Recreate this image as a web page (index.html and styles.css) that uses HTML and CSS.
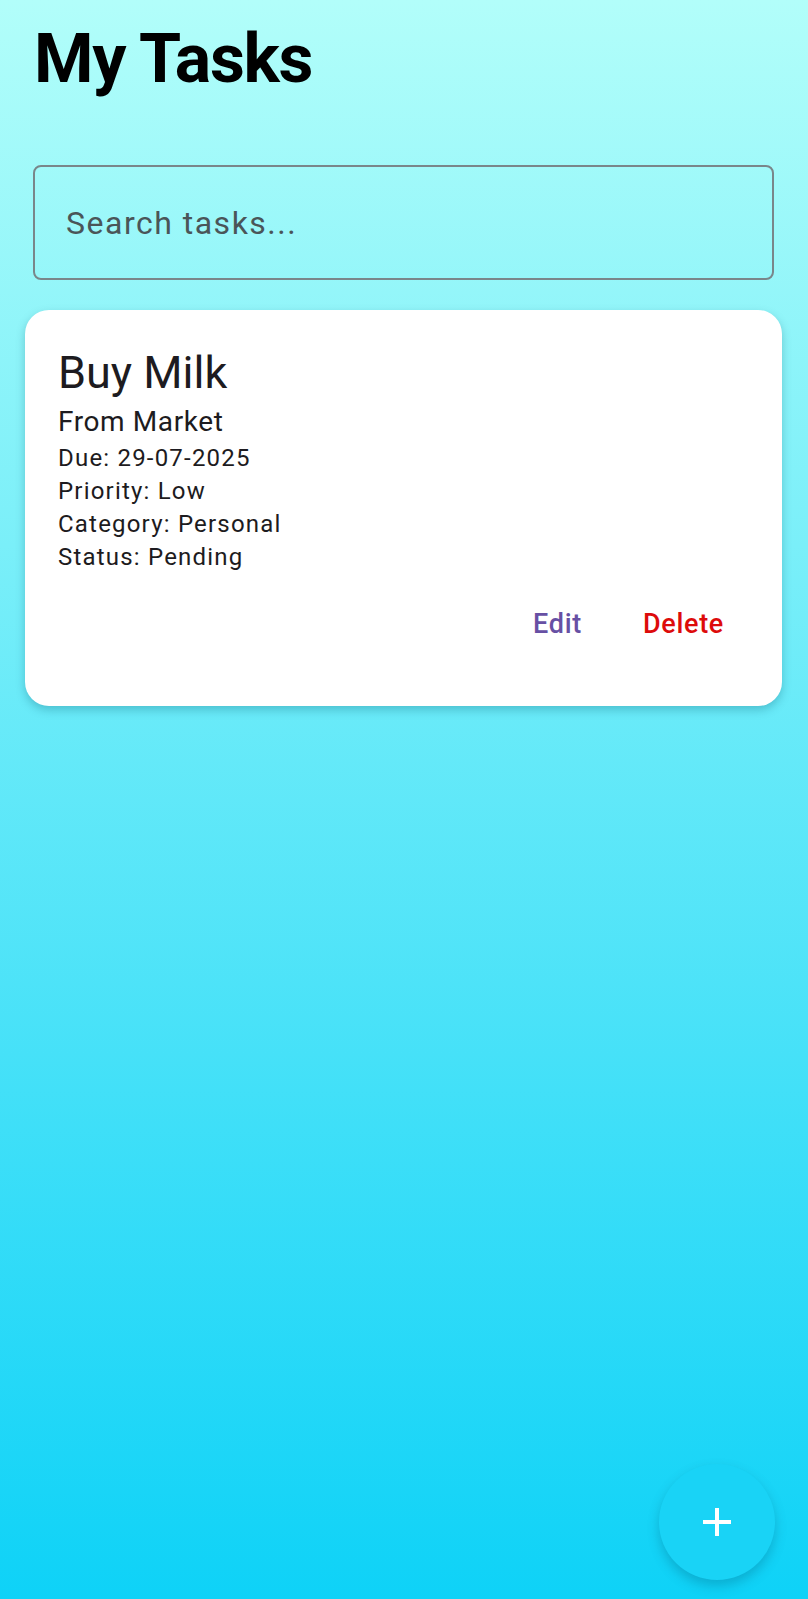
FILE: index.html
```html
<!DOCTYPE html>
<html lang="en">
<head>
<meta charset="utf-8">
<title>My Tasks</title>
<link rel="stylesheet" href="styles.css">
</head>
<body>
<main class="screen">
  <h1 class="page-title">My Tasks</h1>
  <div class="search">
    <input class="search-input" type="text" placeholder="Search tasks...">
  </div>
  <section class="task-list">
    <article class="task-card">
      <h2 class="task-title">Buy Milk</h2>
      <p class="task-desc">From Market</p>
      <p class="task-meta">Due: 29-07-2025</p>
      <p class="task-meta">Priority: Low</p>
      <p class="task-meta">Category: Personal</p>
      <p class="task-meta">Status: Pending</p>
      <div class="task-actions">
        <button class="text-btn edit">Edit</button>
        <button class="text-btn delete">Delete</button>
      </div>
    </article>
  </section>
</main>
<button class="fab" aria-label="Add task">
  <svg width="30" height="30" viewBox="0 0 30 30"><path d="M15 1v28M1 15h28" stroke="#fff" stroke-width="4" fill="none"/></svg>
</button>
</body>
</html>
```
FILE: styles.css
```css
html, body {
  margin: 0;
  padding: 0;
  height: 100%;
}
body {
  min-height: 1599px;
  background: linear-gradient(to bottom, #b2fefa 0%, #0ed2f7 100%);
  font-family: Roboto, "Noto Sans", sans-serif;
  color: #1d1b20;
  position: relative;
  overflow: hidden;
}
.screen {
  display: flex;
  flex-direction: column;
  padding: 19px 25px 0 25px;
}
.page-title {
  margin: 0 0 0 9px;
  font-size: 68px;
  line-height: 80px;
  font-weight: 700;
  color: #000;
  letter-spacing: -1.3px;
}
.search {
  margin: 66px 9px 0 8px;
}
.search-input {
  box-sizing: border-box;
  width: 100%;
  height: 115px;
  border: 2px solid #79868a;
  border-radius: 8px;
  background: transparent;
  padding: 0 0 0 31px;
  font-family: Roboto, sans-serif;
  font-size: 32px;
  letter-spacing: 1.5px;
  color: #1d1b20;
  outline: none;
}
.search-input::placeholder {
  color: #4a5558;
}
.task-list {
  margin-top: 30px;
}
.task-card {
  background: #fff;
  border-radius: 24px;
  padding: 37px 58px 62px 33px;
  box-shadow: 0 4px 10px rgba(0, 80, 100, 0.28);
  margin-right: 1px;
}
.task-title {
  margin: 0;
  font-size: 45px;
  line-height: 52px;
  font-weight: 400;
}
.task-desc {
  margin: 5px 0 2px;
  font-size: 28px;
  line-height: 36px;
  letter-spacing: 0.6px;
}
.task-meta {
  margin: 0;
  font-size: 24px;
  line-height: 33px;
  letter-spacing: 1.2px;
}
.task-actions {
  display: flex;
  justify-content: flex-end;
  gap: 61px;
  margin-top: 30px;
}
.text-btn {
  border: 0;
  background: none;
  padding: 0;
  font-family: Roboto, sans-serif;
  font-size: 27px;
  line-height: 40px;
  font-weight: 500;
  letter-spacing: 0.7px;
  cursor: pointer;
}
.text-btn.edit { color: #6750a4; }
.text-btn.delete { color: #dd0b0b; }
.fab {
  position: absolute;
  right: 33px;
  bottom: 19px;
  width: 116px;
  height: 116px;
  border-radius: 50%;
  border: 0;
  background: #19d3f6;
  box-shadow: 0 6px 12px rgba(0, 90, 120, 0.3);
  display: flex;
  align-items: center;
  justify-content: center;
  padding: 0;
}
```
